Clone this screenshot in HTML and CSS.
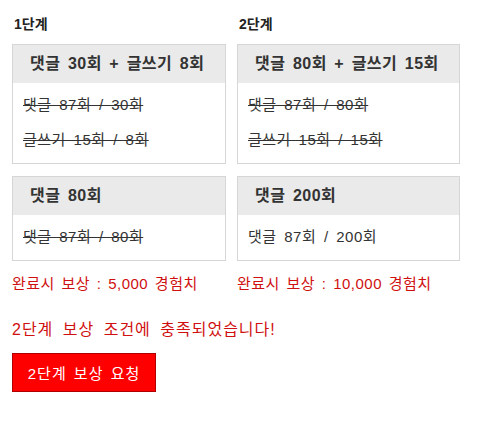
FILE: index.html
```html
<!DOCTYPE html>
<html lang="ko">

<head>
	<meta charset="UTF-8">
	<title>단계 보상</title>
	<link rel="stylesheet" href="styles.css">
</head>

<body>
<div class="wrap">
	<div class="stages">
		<div class="stage">
			<h3>1단계</h3>
			<div class="box">
				<div class="box-head">댓글 30회 + 글쓰기 8회</div>
				<ul class="box-body">
					<li class="done">댓글 87회 / 30회</li>
					<li class="done">글쓰기 15회 / 8회</li>
				</ul>
			</div>
			<div class="box">
				<div class="box-head">댓글 80회</div>
				<ul class="box-body">
					<li class="done">댓글 87회 / 80회</li>
				</ul>
			</div>
			<p class="reward">완료시 보상 : 5,000 경험치</p>
		</div>
		<div class="stage stage-wide">
			<h3>2단계</h3>
			<div class="box">
				<div class="box-head">댓글 80회 + 글쓰기 15회</div>
				<ul class="box-body">
					<li class="done">댓글 87회 / 80회</li>
					<li class="done">글쓰기 15회 / 15회</li>
				</ul>
			</div>
			<div class="box">
				<div class="box-head">댓글 200회</div>
				<ul class="box-body">
					<li>댓글 87회 / 200회</li>
				</ul>
			</div>
			<p class="reward">완료시 보상 : 10,000 경험치</p>
		</div>
	</div>
	<p class="notice">2단계 보상 조건에 충족되었습니다!</p>
	<button class="btn-reward" type="button">2단계 보상 요청</button>
</div>
</body>

</html>
```

FILE: styles.css
```css
* {
	padding: 0;
	margin: 0;
	list-style: none;
	box-sizing: border-box;
}

body {
	font-family: "Liberation Sans", "Noto Sans CJK KR", sans-serif;
	color: #333;
	background: #fff;
}

.wrap {
	padding: 14px 12px;
}

.stages {
	display: flex;
	gap: 11px;
}

.stage {
	width: 214px;
	display: flex;
	flex-direction: column;
}

.stage-wide {
	width: 223px;
}

.stage h3 {
	font-size: 14px;
	line-height: 20px;
	color: #222;
	padding-left: 2px;
	margin-bottom: 10px;
}

.box {
	border: 1px solid #d6d6d6;
	margin-bottom: 12px;
}

.box-head {
	background: #eaeaea;
	height: 38px;
	line-height: 38px;
	padding: 0 17px;
	font-size: 16px;
	font-weight: bold;
	letter-spacing: 0.5px;
	word-spacing: 2.5px;
	color: #333;
	white-space: nowrap;
}

.box-body {
	padding: 4px 10px 6px;
}

.box-body li {
	line-height: 35px;
	font-size: 15px;
	letter-spacing: 0.5px;
	word-spacing: 3px;
	color: #333;
}

.box-body li.done {
	text-decoration: line-through;
}

.reward {
	margin-top: 1px;
	line-height: 20px;
	font-size: 15px;
	letter-spacing: 0.5px;
	word-spacing: 2px;
	color: #d01010;
}

.notice {
	margin-top: 26px;
	line-height: 20px;
	font-size: 16px;
	letter-spacing: 1px;
	word-spacing: 4px;
	color: #d01010;
}

.btn-reward {
	margin-top: 13px;
	width: 144px;
	height: 39px;
	background: #ff0000;
	border: 1px solid #b00000;
	color: #fff;
	font-family: inherit;
	font-size: 15px;
	letter-spacing: 1px;
	word-spacing: 2px;
	cursor: pointer;
}
```
